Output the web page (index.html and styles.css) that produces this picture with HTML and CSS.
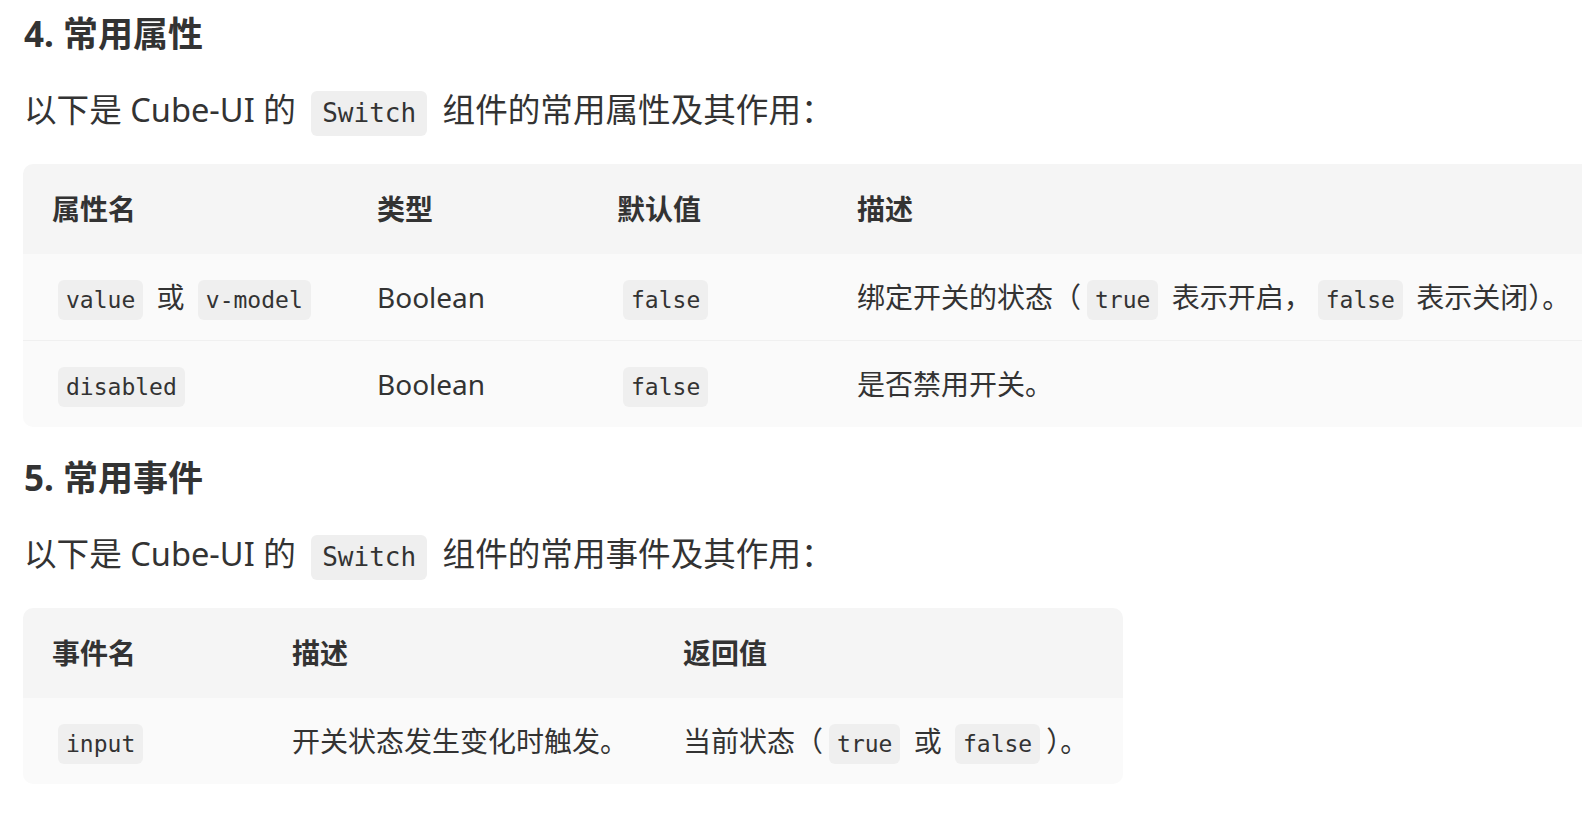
FILE: index.html
```html
<!DOCTYPE html>
<html>
<head>
  <meta charset="utf-8">
  <title>Cube-UI Switch</title>
  <link rel="stylesheet" href="styles.css">
</head>
<body>
  <h3 class="title">4. 常用属性</h3>
  <p class="intro">以下是 Cube-UI 的 <code>Switch</code> 组件的常用属性及其作用：</p>
  <div class="table-wrap">
    <table>
      <thead>
        <tr>
          <th class="w325">属性名</th>
          <th class="w240">类型</th>
          <th class="w240">默认值</th>
          <th>描述</th>
        </tr>
      </thead>
      <tbody>
        <tr>
          <td><code>value</code> 或 <code>v-model</code></td>
          <td>Boolean</td>
          <td><code>false</code></td>
          <td>绑定开关的状态（<code>true</code> 表示开启，<code>false</code> 表示关闭）。</td>
        </tr>
        <tr>
          <td><code>disabled</code></td>
          <td>Boolean</td>
          <td><code>false</code></td>
          <td>是否禁用开关。</td>
        </tr>
      </tbody>
    </table>
  </div>

  <h3 class="title">5. 常用事件</h3>
  <p class="intro">以下是 Cube-UI 的 <code>Switch</code> 组件的常用事件及其作用：</p>
  <div class="table-wrap">
    <table>
      <thead>
        <tr>
          <th class="w240">事件名</th>
          <th class="w388">描述</th>
          <th class="w469">返回值</th>
        </tr>
      </thead>
      <tbody>
        <tr>
          <td><code>input</code></td>
          <td>开关状态发生变化时触发。</td>
          <td>当前状态（<code>true</code> 或 <code>false</code>）。</td>
        </tr>
      </tbody>
    </table>
  </div>
</body>
</html>
```

FILE: styles.css
```css
/* Страница */
html, body {
  overflow: hidden;
}
body {
  margin: 0;
  padding: 12px 0 0 23px;
  font-family: "Noto Sans", "Noto Sans CJK SC", sans-serif;
  color: #333;
  background: #fff;
}
.title {
  margin: 0;
  font-size: 35px;
  line-height: 44px;
  font-weight: 700;
  padding-left: 1px;
}
.intro {
  margin: 26px 0 26px;
  font-size: 32.6px;
  line-height: 56px;
  padding-left: 1px;
}
.table-wrap + .title {
  margin-top: 29px;
}
.title + .intro {
  margin-top: 26px;
}
code {
  display: inline-block;
  font-family: "DejaVu Sans Mono", "Liberation Mono", monospace;
  background: #efefef;
  color: #333;
  border-radius: 6px;
}
.intro code {
  font-size: 26px;
  line-height: 45px;
  padding: 0 11px;
  margin: 0 7px;
}

/* Таблицы */
.table-wrap {
  width: max-content;
  border-radius: 10px;
  overflow: hidden;
}
table {
  border-collapse: collapse;
  font-size: 28px;
}
th, td {
  box-sizing: border-box;
  text-align: left;
  white-space: nowrap;
  line-height: 46px;
  padding-left: 29px;
  padding-right: 26px;
}
th {
  background: #f5f5f5;
  font-weight: 700;
  padding-top: 22px;
  padding-bottom: 22px;
}
td {
  background: #fafafa;
  padding-top: 20px;
  padding-bottom: 20px;
}
tbody tr + tr td {
  border-top: 1px solid #f0f0f0;
}
td code {
  font-size: 23px;
  line-height: 40px;
  padding: 0 8px;
  margin: 0 6px;
}
.w240 { width: 240px; }
.w325 { width: 325px; }
.w388 { width: 388px; }
.w469 { width: 469px; }
```
